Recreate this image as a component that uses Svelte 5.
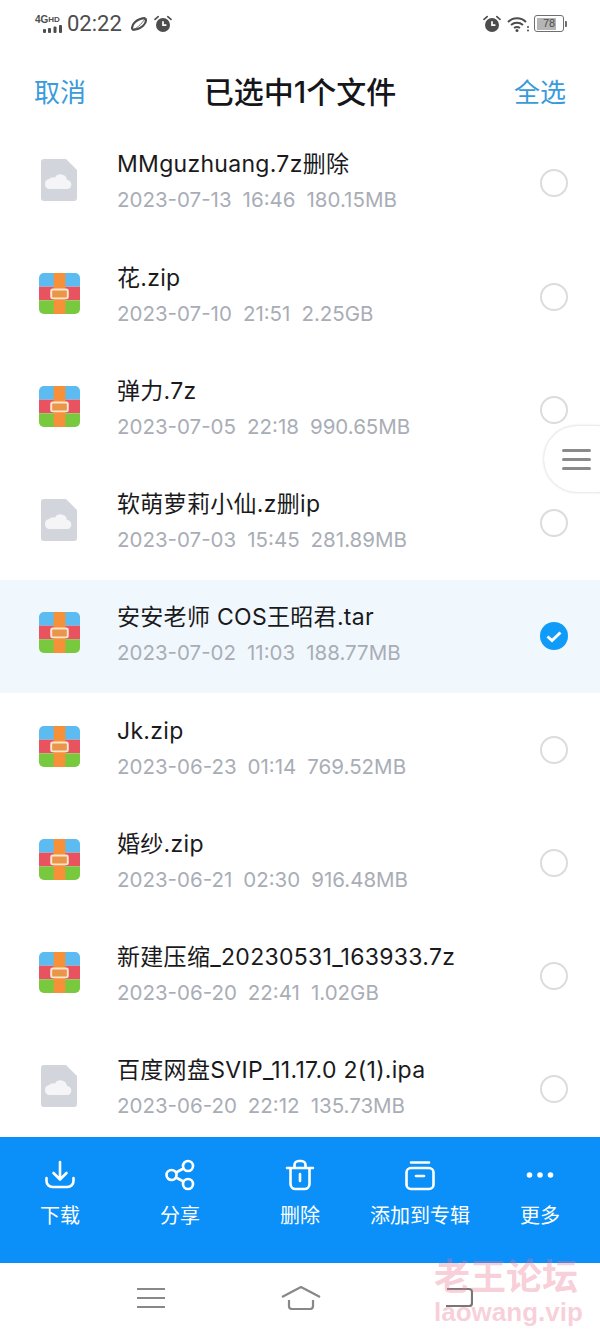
<script lang="ts">
  type FileRow = { name: string; date: string; time: string; size: string; kind: "zip" | "cloud"; selected?: boolean };

  const files: FileRow[] = [
    { name: "MMguzhuang.7z删除", date: "2023-07-13", time: "16:46", size: "180.15MB", kind: "cloud" },
    { name: "花.zip", date: "2023-07-10", time: "21:51", size: "2.25GB", kind: "zip" },
    { name: "弹力.7z", date: "2023-07-05", time: "22:18", size: "990.65MB", kind: "zip" },
    { name: "软萌萝莉小仙.z删ip", date: "2023-07-03", time: "15:45", size: "281.89MB", kind: "cloud" },
    { name: "安安老师 COS王昭君.tar", date: "2023-07-02", time: "11:03", size: "188.77MB", kind: "zip", selected: true },
    { name: "Jk.zip", date: "2023-06-23", time: "01:14", size: "769.52MB", kind: "zip" },
    { name: "婚纱.zip", date: "2023-06-21", time: "02:30", size: "916.48MB", kind: "zip" },
    { name: "新建压缩_20230531_163933.7z", date: "2023-06-20", time: "22:41", size: "1.02GB", kind: "zip" },
    { name: "百度网盘SVIP_11.17.0 2(1).ipa", date: "2023-06-20", time: "22:12", size: "135.73MB", kind: "cloud" }
  ];

  const actions = ["下载", "分享", "删除", "添加到专辑", "更多"];
</script>

{#snippet alarm()}
  <svg class="alarm" viewBox="0 0 18 18" width="18" height="18">
    <circle cx="9" cy="10" r="7" fill="#4d4d4d" />
    <path d="M9 6.200V10.200H12.400" fill="none" stroke="#fff" stroke-width="1.700" />
    <path d="M1 4.400 4.200 1.600M17 4.400 13.800 1.600" stroke="#4d4d4d" stroke-width="1.600" stroke-linecap="round" />
  </svg>
{/snippet}

<div class="phone">
  <div class="status">
    <div class="status-left">
      <div class="net">
        <span class="net-label">4G<small>HD</small></span>
        <svg viewBox="0 0 19 8" width="19" height="8">
          <rect x="0" y="4" width="3" height="4" rx="1" fill="#4d4d4d" />
          <rect x="5" y="3" width="3" height="5" rx="1" fill="#4d4d4d" />
          <rect x="10.500" y="1.500" width="3" height="6.500" rx="1" fill="#4d4d4d" />
          <rect x="16" y="0" width="3" height="8" rx="1" fill="#4d4d4d" />
        </svg>
      </div>
      <span class="clock">02:22</span>
      <svg class="swirl" viewBox="0 0 18 16" width="18" height="16">
        <path d="M2.500 13.500C0.500 9 6.500 2.500 15.500 2.200 M15.500 2.500C17.500 7 11.500 13.500 2.500 13.800" fill="none" stroke="#4d4d4d" stroke-width="2.200" />
        <path d="M2 14C6 13 11 9 15.500 2" fill="none" stroke="#4d4d4d" stroke-width="0.800" />
      </svg>
      {@render alarm()}
    </div>
    <div class="status-right">
      {@render alarm()}
      <svg class="wifi" viewBox="0 0 22 16" width="22" height="16">
        <path d="M1 6C6 1 14 1 19 6M4 9C7.500 6 12.500 6 16 9M7 12C9 10.600 11 10.600 13 12" fill="none" stroke="#4d4d4d" stroke-width="2" />
        <circle cx="10" cy="14.500" r="1.500" fill="#4d4d4d" />
        <circle cx="21" cy="11" r="1" fill="#4d4d4d" />
        <circle cx="21" cy="14.500" r="1" fill="#4d4d4d" />
      </svg>
      <div class="battery">
        <div class="battery-body"><div class="battery-fill" style="width: 78%"></div><span>78</span></div>
        <div class="battery-tip"></div>
      </div>
    </div>
  </div>

  <header class="topbar">
    <span class="link">取消</span>
    <h1>已选中1个文件</h1>
    <span class="link">全选</span>
  </header>

  <div class="list">
    {#each files as file}
      <div class="row" class:selected={file.selected}>
        <div class="file-icon">
          {#if file.kind === "zip"}
            <svg viewBox="0 0 42 42" width="41" height="41">
              <defs>
                <clipPath id="zip-clip"><rect width="42" height="42" rx="5" /></clipPath>
              </defs>
              <g clip-path="url(#zip-clip)">
                <rect width="42" height="14" fill="#5cbcf2" />
                <rect y="14" width="42" height="14" fill="#e8535f" />
                <rect y="28" width="42" height="14" fill="#79c93f" />
                <rect x="15" width="12" height="42" fill="#f6913a" />
              </g>
              <rect x="12.500" y="17" width="17" height="9" rx="1.500" fill="#e9964a" stroke="#fbe6cf" stroke-width="2" />
            </svg>
          {:else}
            <svg viewBox="0 0 36 42" width="36" height="42">
              <path d="M3 0H25L36 11V39A3 3 0 0 1 33 42H3A3 3 0 0 1 0 39V3A3 3 0 0 1 3 0Z" fill="#d3d5dc" />
              <path d="M9 30A5 5 0 0 1 8 20.100A6 6 0 0 1 14 18.500A6.500 6.500 0 0 1 26 21A4.600 4.600 0 0 1 27 30Z" fill="#f5f5f7" />
            </svg>
          {/if}
        </div>
        <div class="file-text">
          <div class="file-name">{file.name}</div>
          <div class="file-meta"><span>{file.date}</span><span>{file.time}</span><span>{file.size}</span></div>
        </div>
        {#if file.selected}
          <svg class="check" viewBox="0 0 28 28" width="28" height="28">
            <circle cx="14" cy="14" r="14" fill="#0f9bf7" />
            <path d="M7.500 14.500 12 18.500 20.500 10.500" fill="none" stroke="#fff" stroke-width="3" />
          </svg>
        {:else}
          <div class="radio"></div>
        {/if}
      </div>
    {/each}
  </div>

  <div class="toolbar">
    {#each actions as label, i}
      <div class="action">
        <svg viewBox="0 0 32 32" width="32" height="32" fill="none" stroke="#fff" stroke-width="2.600" stroke-linecap="round" stroke-linejoin="round">
          {#if i === 0}
            <path d="M16 3V20M9.500 14 16 20.500 22.500 14M2.500 19V22A6 6 0 0 0 8.500 28H23.500A6 6 0 0 0 29.500 22V19" />
          {:else if i === 1}
            <circle cx="7.500" cy="16" r="5" /><circle cx="24" cy="7" r="5" /><circle cx="24" cy="25" r="5" />
            <path d="M12 13.500 19.500 9.500M12 18.500 19.500 22.500" />
          {:else if i === 2}
            <path d="M3 9H29M6.500 9V25A5 5 0 0 0 11.500 30H20.500A5 5 0 0 0 25.500 25V9M10.500 9V6A4 4 0 0 1 14.500 2H17.500A4 4 0 0 1 21.500 6V9M16 15V22" />
          {:else if i === 3}
            <rect x="2.500" y="9" width="27" height="21" rx="4.500" /><path d="M7 3.500H25M12 17H20" />
          {:else}
            <circle cx="5.500" cy="16" r="1.500" fill="#fff" /><circle cx="16" cy="16" r="1.500" fill="#fff" /><circle cx="26.500" cy="16" r="1.500" fill="#fff" />
          {/if}
        </svg>
        <span>{label}</span>
      </div>
    {/each}
  </div>

  <nav class="navbar">
    <svg class="nav-menu" viewBox="0 0 28 22" width="28" height="22" fill="none" stroke="#888" stroke-width="2.200">
      <path d="M0 2H28M0 11H28M0 20H28" />
    </svg>
    <svg class="nav-home" viewBox="0 0 40 24" width="40" height="24" fill="none" stroke="#888" stroke-width="2.200" stroke-linejoin="round">
      <path d="M1 11 20 1 39 11M8 14V20A3 3 0 0 0 11 23H29A3 3 0 0 0 32 20V14" />
    </svg>
    <svg viewBox="0 0 28 22" width="28" height="22" fill="none" stroke="#777" stroke-width="2.200">
      <path d="M2 2H24A3 3 0 0 1 27 5V16A3 3 0 0 1 24 19H1" />
    </svg>
  </nav>

  <!-- floating quick menu handle on the right edge -->
  <div class="handle">
    <span></span><span></span><span></span>
  </div>

  <div class="watermark">
    <div class="wm-cn">老王论坛</div>
    <div class="wm-en">laowang.vip</div>
  </div>
</div>

<style>
  :global(body) {
    margin: 0;
    background: #fff;
  }

  .phone {
    position: relative;
    width: 600px;
    height: 1333px;
    display: flex;
    flex-direction: column;
    overflow: hidden;
    background: #fff;
    font-family: Inter, "Noto Sans CJK SC", sans-serif;
    color: #1a1a1c;
  }

  .status {
    height: 46px;
    flex-shrink: 0;
    display: flex;
    align-items: center;
    justify-content: space-between;
    padding: 1px 33px 0 35px;
    box-sizing: border-box;
    color: #4d4d4d;
  }

  .status-left,
  .status-right {
    display: flex;
    align-items: center;
  }

  .net {
    display: flex;
    flex-direction: column;
    align-items: flex-end;
    width: 27px;
    margin-right: 5px;
  }

  .net-label {
    width: 100%;
    font-size: 10px;
    line-height: 11px;
    font-weight: 700;
    white-space: nowrap;
    font-family: "Liberation Sans", sans-serif;
  }

  .net-label small {
    font-size: 8px;
    vertical-align: 1px;
  }

  .clock {
    font-family: Roboto, sans-serif;
    font-size: 22px;
  }

  .swirl {
    margin-left: 8px;
  }

  .status-left .alarm {
    margin-left: 6px;
  }

  .wifi {
    margin-left: 6px;
  }

  .battery {
    display: flex;
    align-items: center;
    margin-left: 5px;
  }

  .battery-body {
    position: relative;
    width: 25px;
    height: 12px;
    border: 1.500px solid #6f6f6f;
    border-radius: 3px;
    padding: 1.500px;
    box-sizing: content-box;
  }

  .battery-fill {
    height: 100%;
    background: #b5b5b5;
  }

  .battery-body span {
    position: absolute;
    inset: 0;
    font-size: 11px;
    line-height: 15px;
    text-align: center;
    font-weight: 500;
    font-family: "Liberation Sans", sans-serif;
  }

  .battery-tip {
    width: 2px;
    height: 6px;
    margin-left: 1px;
    background: #6f6f6f;
    border-radius: 0 1px 1px 0;
  }

  .topbar {
    height: 80.750px;
    flex-shrink: 0;
    display: flex;
    align-items: center;
    justify-content: space-between;
    padding: 8px 34px 0;
    box-sizing: border-box;
  }

  .topbar h1 {
    margin: 0;
    font-size: 30px;
    font-weight: 500;
    color: #15161a;
  }

  .link {
    font-size: 26px;
    color: #3a9bdc;
  }

  .list {
    flex: 1;
    min-height: 0;
    overflow: hidden;
  }

  .row {
    height: 113.250px;
    display: flex;
    align-items: center;
    padding: 0 32px 0 38px;
    box-sizing: border-box;
  }

  .row.selected {
    background: #f1f8fd;
  }

  .file-icon {
    width: 42px;
    margin-right: 37px;
    margin-top: -7px;
    display: flex;
    justify-content: center;
  }

  .file-text {
    flex: 1;
    min-width: 0;
    margin-top: -4px;
  }

  .file-name {
    font-size: 23px;
    line-height: 30px;
    letter-spacing: 0.3px;
    margin-bottom: 8px;
    white-space: nowrap;
  }

  .file-meta {
    display: flex;
    gap: 11px;
    font-size: 20.500px;
    line-height: 26px;
    color: #a9adb6;
  }

  .radio {
    width: 28px;
    height: 28px;
    box-sizing: border-box;
    border: 2px solid #dcdcdc;
    border-radius: 50%;
  }

  .toolbar {
    height: 126px;
    flex-shrink: 0;
    display: grid;
    grid-template-columns: repeat(5, 120px);
    background: #0a90f8;
    color: #fff;
  }

  .action {
    display: flex;
    flex-direction: column;
    align-items: center;
    padding-top: 22px;
    gap: 12px;
    font-size: 20px;
    line-height: 26px;
  }

  .navbar {
    height: 70px;
    flex-shrink: 0;
    display: flex;
    align-items: center;
    padding-left: 137px;
  }

  .nav-menu {
    margin-right: 116px;
  }

  .nav-home {
    margin-right: 124px;
  }

  .handle {
    position: absolute;
    top: 426px;
    right: -30px;
    width: 86px;
    height: 66px;
    padding-left: 18px;
    box-sizing: border-box;
    display: flex;
    flex-direction: column;
    justify-content: center;
    gap: 6px;
    background: #fff;
    border-radius: 33px;
    box-shadow: 0 0 3px rgba(0, 0, 0, 0.22);
  }

  .handle span {
    width: 29px;
    height: 3px;
    border-radius: 2px;
    background: #8a8a8a;
  }

  .watermark {
    position: absolute;
    left: 434px;
    top: 1252px;
    color: rgba(236, 120, 145, 0.36);
    font-weight: 700;
    pointer-events: none;
  }

  .wm-cn {
    font-size: 36px;
    line-height: 44px;
    font-family: "Noto Sans CJK SC", sans-serif;
  }

  .wm-en {
    font-size: 26px;
    line-height: 32px;
    font-family: "Liberation Sans", sans-serif;
  }
</style>
